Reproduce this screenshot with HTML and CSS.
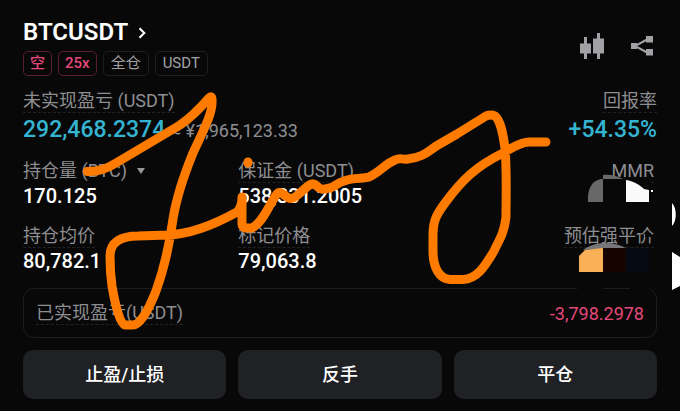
FILE: index.html
```html
<!DOCTYPE html>
<html lang="zh-CN">

<head>
    <meta charset="UTF-8">
    <meta name="viewport" content="width=device-width, initial-scale=1.0">
    <title>BTCUSDT</title>
    <link rel="stylesheet" href="styles.css">
</head>

<body>

    <main class="position">
        <header class="header">
            <div class="heading">
                <h1 class="symbol">
                    <a href="#">BTCUSDT
                        <svg class="chevron" viewBox="0 0 8 12" width="8" height="12"><path d="M1.5 1.2L6.3 6L1.5 10.8"/></svg>
                    </a>
                </h1>
                <div class="tags">
                    <span class="tag short">空</span>
                    <span class="tag short">25x</span>
                    <span class="tag">全仓</span>
                    <span class="tag">USDT</span>
                </div>
            </div>
            <div class="actions">
                <button class="icon-btn" aria-label="K线">
                    <svg viewBox="0 0 24 26" width="24" height="26"><path d="M0 10.5h4V4h3v6.5h4v10H7V26H4v-5.5H0zM13 5.5h4V0h3v5.5h4v15h-4V26h-3v-5.5h-4z"/></svg>
                </button>
                <button class="icon-btn" aria-label="分享">
                    <svg viewBox="0 0 22 20" width="22" height="20"><path d="M0 7h6v6H0zM15 0h7v6.500h-7zM15 13h7v6.500h-7z"/><path class="share-line" d="M17 3L4 10L17 17"/></svg>
                </button>
            </div>
        </header>

        <section class="pnl">
            <div class="cell">
                <span class="label">未实现盈亏 (USDT)</span>
                <div class="value big">292,468.2374 <small>≈ ¥1,965,123.33</small></div>
            </div>
            <div class="cell right">
                <span class="label">回报率</span>
                <div class="value big">+54.35%</div>
            </div>
        </section>

        <section class="stats">
            <div class="cell">
                <span class="label plain">持仓量 (BTC)<i class="caret"></i></span>
                <div class="value">170.125</div>
            </div>
            <div class="cell">
                <span class="label">保证金 (USDT)</span>
                <div class="value">538,331.2005</div>
            </div>
            <div class="cell right inset">
                <span class="label">MMR</span>
                <div class="value"></div>
            </div>
            <div class="cell">
                <span class="label">持仓均价</span>
                <div class="value">80,782.1</div>
            </div>
            <div class="cell">
                <span class="label">标记价格</span>
                <div class="value">79,063.8</div>
            </div>
            <div class="cell right inset">
                <span class="label">预估强平价</span>
                <div class="value"></div>
            </div>
        </section>

        <section class="realized">
            <span class="label">已实现盈亏(USDT)</span>
            <span class="loss">-3,798.2978</span>
        </section>

        <div class="buttons">
            <button class="btn">止盈/止损</button>
            <button class="btn">反手</button>
            <button class="btn">平仓</button>
        </div>
    </main>

    <!-- hidden values and handwritten signature -->
    <svg class="overlay" viewBox="0 0 680 411" aria-hidden="true">
        <path fill="#080808" d="M603 179h46v11l-46-2zM634 227h9v6h-9zM645 232l6 1v4h-6zM577 286h26v6h-26zM630 286h20v6h-20z"/>
        <path fill="#686868" d="M588 202c-1-14 5-23 15-23v23z"/>
        <path fill="#686868" d="M603 175c8-1 14 1 20 4l-20 0z"/>
        <path fill="#fafafa" d="M626 180c8 1 15 6 18 9l5 1v12h-23zM651 190h2v2h-2z"/>
        <path fill="#77777a" d="M583 250c12-9 29-9 43-2l-23 1z"/>
        <path fill="#fab057" d="M579 256l6-6l18-2v24h-24z"/>
        <path fill="#150300" d="M603 248h23v24h-23z"/>
        <path fill="#040912" d="M626 248h23v24h-23z"/>
        <path fill="#fff" d="M672 203c5 5 5 18 0 23zM672 252l8 5v29l-8 4z"/>
        <path class="ink" d="M87 171.500C99 172 108 168 116 163L180 125C192 117 202 106 209 98Q212 95 212 100C213 113 204 129 193 153C184 175 177 194 173 219C169 248 164 269 156 291C147 314 139 325 133 325H125C120 325 115 304 112 286C110 272 110 264 110 256C110 242 121 236 138 236L168 235C192 234 219 222 237 212C240 209 242 203 242 197V224Q242 228 246 228H252C264 222 270 202 277 194Q279 191 283 194C291 201 293 199 300 193L308 186Q313 182 317 186C321 191 325 189 330 188C336 186 337 183 344 181C354 177 363 179 369 177C380 172 385 164 395 160C401 157 401 160 408 159C425 157 429 150 438 145L457 134L486 116Q491 114 495 116C501 121 503 134 505 148C507 172 506 195 506 217C504 234 499 240 494 251C486 264 478 279 463 279.500H450C439 279 433 267 433 251V235C433 220 437 214 445 203C462 180 475 167 503 153C516 145 523 142 529 142H546"/>
        <path class="ink" d="M248 162v1"/>
    </svg>

</body>

</html>
```

FILE: styles.css
```css
* {
    box-sizing: border-box;
}

body {
    margin: 0;
    background-color: #080808;
    color: #fff;
    font-family: Roboto, "Noto Sans CJK SC", sans-serif;
    position: relative;
}

button {
    font-family: inherit;
    color: inherit;
    border: none;
    cursor: pointer;
}

.position {
    padding: 18px 23px 12px;
}

.header {
    display: flex;
    justify-content: space-between;
    margin-bottom: 14px;
}

.symbol {
    margin: 0 0 4px;
    font-size: 24px;
    line-height: 29px;
    font-weight: 600;
}

.symbol a {
    display: flex;
    align-items: center;
    gap: 10px;
    color: inherit;
    text-decoration: none;
}

.chevron {
    fill: none;
    stroke: #fff;
    stroke-width: 2;
}

.tags {
    display: flex;
    gap: 6px;
}

.tag {
    height: 25px;
    padding: 0 7px;
    border: 1px solid #1e1e21;
    border-radius: 5px;
    color: #a2a2a6;
    font-size: 15px;
    line-height: 23px;
}

.tag.short {
    padding: 0 6px;
    border-color: #5e1c32;
    color: #e4487a;
    font-weight: 500;
}

.actions {
    display: flex;
    align-items: center;
    gap: 27px;
    padding: 0 4px 2px 0;
}

.icon-btn {
    display: flex;
    padding: 0;
    background: none;
    fill: #a2a2a6;
}

.share-line {
    fill: none;
    stroke: #a2a2a6;
    stroke-width: 2;
}

.pnl {
    display: flex;
    justify-content: space-between;
    margin-bottom: 17px;
}

.stats {
    display: grid;
    grid-template-columns: repeat(3, 1fr);
    gap: 17px 12px;
    margin-bottom: 15px;
}

.cell {
    display: flex;
    flex-direction: column;
    align-items: flex-start;
}

.cell.right {
    align-items: flex-end;
}

.cell.inset {
    padding-right: 3px;
}

.label {
    border-bottom: 1px dashed #222225;
    color: #8e8e92;
    font-size: 18px;
    line-height: 22px;
}

.label.plain {
    border-color: transparent;
}

.caret {
    display: inline-block;
    margin-left: 10px;
    border: 4px solid transparent;
    border-top: 6px solid #98989c;
    border-bottom: none;
    vertical-align: 3px;
}

.value {
    height: 25px;
    font-size: 20px;
    line-height: 27px;
    font-weight: 500;
    white-space: nowrap;
}

.value.big {
    height: 30px;
    color: #35b4d2;
    font-size: 23px;
    line-height: 33px;
}

.value small {
    color: #8e8e92;
    font-size: 18px;
    font-weight: 400;
}

.realized {
    display: flex;
    justify-content: space-between;
    align-items: center;
    height: 50px;
    margin-bottom: 12px;
    padding: 0 12px;
    border: 1px solid #1d1d20;
    border-radius: 11px;
}

.loss {
    color: #e4487a;
    font-size: 18px;
}

.buttons {
    display: grid;
    grid-template-columns: repeat(3, 1fr);
    gap: 12px;
}

.btn {
    height: 49px;
    padding: 0 0 3px;
    border-radius: 10px;
    background-color: #202125;
    font-size: 18px;
    font-weight: 500;
}

/* drawn over the whole card */
.overlay {
    position: absolute;
    top: 0;
    left: 0;
    width: 100%;
    pointer-events: none;
}

.ink {
    fill: none;
    stroke: #ff7b00;
    stroke-width: 9;
    stroke-linecap: round;
    stroke-linejoin: round;
}
```
